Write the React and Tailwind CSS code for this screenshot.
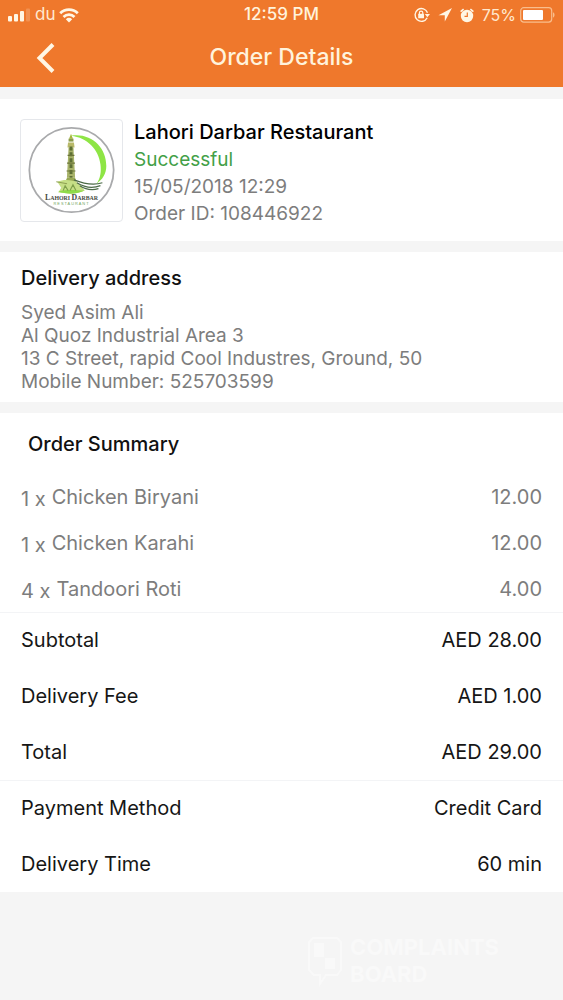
const restaurant = {
  name: "Lahori Darbar Restaurant",
  status: "Successful",
  date: "15/05/2018 12:29",
  orderId: "108446922",
};

const address = [
  "Syed Asim Ali",
  "Al Quoz Industrial Area 3",
  "13 C Street, rapid Cool Industres, Ground, 50",
  "Mobile Number: 525703599",
];

const items = [
  { qty: 1, name: "Chicken Biryani", price: "12.00" },
  { qty: 1, name: "Chicken Karahi", price: "12.00" },
  { qty: 4, name: "Tandoori Roti", price: "4.00" },
];

const totals = [
  ["Subtotal", "AED 28.00"],
  ["Delivery Fee", "AED 1.00"],
  ["Total", "AED 29.00"],
];

const details = [
  ["Payment Method", "Credit Card"],
  ["Delivery Time", "60 min"],
];

function StatusBar() {
  return (
    <div className="grid grid-cols-3 items-center h-7 px-2 pt-0.5 text-[17px] text-[#ffe9cf]">
      <div className="flex items-center gap-1">
        <svg width="23" height="14" viewBox="0 0 23 14" fill="#fff6e4">
          <rect x="0" y="8" width="4" height="5.5" rx="1" />
          <rect x="6" y="6" width="4" height="7.5" rx="1" />
          <rect x="12" y="3" width="4" height="10.5" rx="1" />
          <rect x="18" y="0.5" width="4" height="13" rx="1" opacity="0.2" />
        </svg>
        <span>du</span>
        <svg width="20" height="15" viewBox="0 0 20 15" fill="none" stroke="#fff6e4" strokeWidth="2.8">
          <path d="M1.2 5.2a12.7 12.7 0 0 1 17.6 0" />
          <path d="M4.5 8.9a8 8 0 0 1 11 0" />
          <path d="M10 14.5l-3.2-3.3a4.7 4.7 0 0 1 6.4 0z" fill="#fff6e4" stroke="none" />
        </svg>
      </div>

      <div className="text-center font-medium whitespace-nowrap text-[#fff3dc]">12:59 PM</div>

      <div className="flex items-center justify-end">
        {/* orientation lock */}
        <svg width="16" height="16" viewBox="0 0 16 16" fill="none" stroke="#fff6e4">
          <path d="M13.2 10.8A6.4 6.4 0 1 1 13.5 5.8" strokeWidth="1.4" />
          <path d="M10.8 7h5.2l-2.6 3.2z" fill="#fff6e4" stroke="none" />
          <rect x="4.2" y="6.8" width="5.8" height="4.4" rx="0.5" fill="#fff6e4" stroke="none" />
          <path d="M5.4 7V5.8a1.7 1.7 0 0 1 3.4 0V7" strokeWidth="1.2" />
        </svg>
        {/* location */}
        <svg className="ml-2" width="14" height="14" viewBox="0 0 14 14" fill="#fff6e4">
          <path d="M14 0L0.5 7.2H6.8V13.5z" />
        </svg>
        {/* alarm */}
        <svg className="ml-2" width="14" height="15" viewBox="0 0 14 15" fill="none" stroke="#fff6e4">
          <circle cx="7" cy="8" r="6.2" fill="#fff6e4" stroke="none" />
          <path d="M0.6 3.6L3.6 1.2M13.4 3.6L10.4 1.2" strokeWidth="1.6" />
          <path d="M7.3 4.5V8.3H4.5" stroke="#ef782c" strokeWidth="1.2" />
        </svg>
        <span className="ml-2 text-base">75%</span>
        <svg className="ml-1 shrink-0" width="35" height="16" viewBox="0 0 35 16">
          <rect x="0.7" y="0.7" width="31" height="14.4" rx="3" fill="none" stroke="#f9bd8c" strokeWidth="1.2" />
          <rect x="3" y="3" width="20" height="10" rx="1" fill="#fff" />
          <path d="M33 5.2c2 .8 2 4.6 0 5.4z" fill="#f9bd8c" />
        </svg>
      </div>
    </div>
  );
}

function RestaurantLogo() {
  return (
    <svg
      className="shrink-0 rounded border border-gray-200"
      width="103"
      height="103"
      viewBox="0 0 103 103"
      role="img"
      aria-label="Lahori Darbar Restaurant logo"
    >
      <circle cx="51.5" cy="51" r="43" fill="#fff" stroke="#a9aaac" strokeWidth="1.8" />
      {/* green crescent */}
      <path d="M51 16C72 13 87 28 87 47C87 55 83 61 77 65C81 59 82 53 81 45C79 30 68 18 51 16z" fill="#8ee545" />
      {/* minaret */}
      <path d="M51 14l2 5h-4z" fill="#a6b83c" />
      <rect x="48.5" y="19" width="5" height="3" fill="#8a9a4a" />
      <path d="M48 23h6l.6 5h-7.2z" fill="#b8b96a" />
      <path d="M48.5 28h5l1.7 31h-8.4z" fill="#a7b269" />
      <path d="M51 27v32" stroke="#5d6f35" strokeWidth="3" strokeDasharray="4 2" />
      <path d="M47.5 36h7M47 44h8M46.5 52h9" stroke="#6b7438" strokeWidth="1.2" />
      <path d="M47 59h8l2 4H45z" fill="#98a954" />
      <path d="M37 63c7-3 15-2 21 1l7 8c-9 4-18 3-27 2l3-5z" fill="#c6df86" />
      <path d="M38 73c10-3 20-1 27-1-7 4-19 4-27 1z" fill="#8edb4a" />
      <path d="M43 72l2-5 3 5M50 72l3-6 3 6" fill="none" stroke="#7fa04a" strokeWidth="1.2" />
      <path d="M36 63l11 2" stroke="#8d9e52" strokeWidth="1" />
      {/* flag stripes */}
      <g fill="none" stroke="#4c6b47" strokeWidth="1.3">
        <path d="M54 61c10 4 19 6 29 3" />
        <path d="M57 64c8 5 16 6 24 3" />
        <path d="M60 67c6 4 12 5 19 3" />
      </g>
      <text x="51.5" y="82" textAnchor="middle" fontFamily="Liberation Serif, serif" fontSize="6" fontWeight="bold" fill="#454b43">
        <tspan fontSize="8">L</tspan>AHORI <tspan fontSize="8">D</tspan>ARBAR
      </text>
      <text x="51.5" y="87" textAnchor="middle" fontFamily="Liberation Sans, sans-serif" fontSize="4" letterSpacing="1" fill="#74a660">
        RESTAURANT
      </text>
    </svg>
  );
}

function SummaryRows({ rows }) {
  return (
    <tbody className="border-t border-gray-100 text-[#161616]">
      {rows.map(([label, value]) => (
        <tr key={label} className="h-14">
          <th scope="row" className="pl-[21px] text-left font-normal">{label}</th>
          <td className="pr-[21px] text-right">{value}</td>
        </tr>
      ))}
    </tbody>
  );
}

export default function OrderDetails() {
  return (
    <div className="min-h-screen flex flex-col bg-[#f5f5f5] font-['Inter','Liberation_Sans',sans-serif]">
      <header className="bg-[#ef782c]">
        <StatusBar />
        <div className="grid grid-cols-[1fr_auto_1fr] items-center h-[59px] px-8">
          <button aria-label="Back" className="justify-self-start p-1">
            <svg width="20" height="30" viewBox="0 0 20 30" fill="none" stroke="#fff6e4" strokeWidth="4">
              <path d="M17 1.5L3.5 15L17 28.5" />
            </svg>
          </button>
          <h1 className="text-[23px] font-medium text-[#fff3dc]">Order Details</h1>
        </div>
      </header>

      <main className="flex flex-col gap-[11px] pt-3 text-[#7d7d7d]">
        {/* Restaurant */}
        <section className="flex gap-[11px] bg-white px-5 pt-5 pb-3.5">
          <RestaurantLogo />
          <div className="text-[19px] leading-[27px]">
            <h2 className="text-[20px] leading-[27px] font-medium text-black">{restaurant.name}</h2>
            <p className="text-[#43a047]">{restaurant.status}</p>
            <p>{restaurant.date}</p>
            <p>Order ID: {restaurant.orderId}</p>
          </div>
        </section>

        {/* Delivery address */}
        <section className="bg-white px-[21px] pt-3 pb-[9px]">
          <h2 className="mb-[9px] text-[20px] leading-7 font-medium text-[#111]">Delivery address</h2>
          <address className="not-italic text-[19px] leading-[23px]">
            {address.map((line) => (
              <p key={line}>{line}</p>
            ))}
          </address>
        </section>

        {/* Order summary */}
        <section className="bg-white text-[20px]">
          <h2 className="px-7 pt-[17px] pb-4 leading-7 font-medium text-[#111]">Order Summary</h2>
          <table className="w-full border-collapse">
            <tbody>
              {items.map((item) => (
                <tr key={item.name} className="h-[46px]">
                  <td className="pl-[21px]">
                    <div className="flex items-center gap-1.5">
                      <span className="pt-1">{item.qty} x</span>
                      <span>{item.name}</span>
                    </div>
                  </td>
                  <td className="pr-[21px] text-right">{item.price}</td>
                </tr>
              ))}
            </tbody>
            <SummaryRows rows={totals} />
            <SummaryRows rows={details} />
          </table>
        </section>
      </main>

      {/* Watermark */}
      <footer className="mt-auto flex items-center justify-end gap-2 px-16 pb-3 text-[#f9f9f9]">
        <svg width="34" height="52" viewBox="0 0 34 52" fill="none" stroke="currentColor" strokeWidth="2">
          <path d="M5 3h24l4 4v28l-4 5H18l-6 9v-9H6l-5-5V7z" />
          <path d="M6 8h10v14H6zM17 23h10v11H17z" fill="currentColor" stroke="none" />
        </svg>
        <p className="text-[22px] leading-[27px] font-bold">
          COMPLAINTS
          <br />
          BOARD
        </p>
      </footer>
    </div>
  );
}
